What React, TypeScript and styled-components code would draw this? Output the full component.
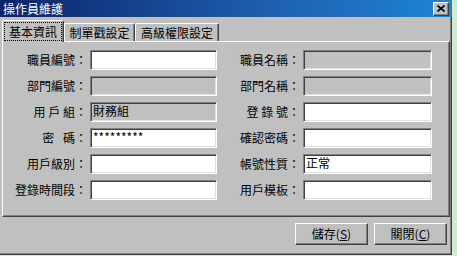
import React from "react";
import styled, { createGlobalStyle } from "styled-components";

const Global = createGlobalStyle`
  html, body { margin: 0; padding: 0; background: #cdeccd; }
  body {
    font-family: "Noto Sans CJK TC", "Liberation Sans", sans-serif;
    font-size: 12px;
    color: #000;
  }
`;

const Window = styled.div`
  width: 452px;
  height: 255px;
  display: flex;
  flex-direction: column;
  background: #c0c0c0;
`;

const TitleBar = styled.div`
  height: 17px;
  flex: 0 0 17px;
  display: flex;
  align-items: center;
  justify-content: space-between;
  padding: 0 3px 0 3px;
  background: linear-gradient(to right, #0a246a 0%, #1f5fb0 60%, #1c84d4 100%);
  color: #fff;
  font-size: 12px;
  line-height: 17px;
`;

const CloseBtn = styled.div`
  width: 16px;
  height: 14px;
  box-sizing: border-box;
  background: #c0c0c0;
  border-top: 1px solid #fff;
  border-left: 1px solid #fff;
  border-right: 1px solid #404040;
  border-bottom: 1px solid #404040;
  box-shadow: inset -1px -1px 0 #808080;
  display: flex;
  align-items: center;
  justify-content: center;
`;

const Body = styled.div`
  flex: 1;
  display: flex;
  flex-direction: column;
  padding: 3px 0 0 2px;
  border-right: 1px solid #404040;
  border-bottom: 1px solid #404040;
  box-shadow: inset -1px -1px 0 #808080;
`;

const TabRow = styled.div`
  display: flex;
  align-items: flex-end;
  height: 21px;
  position: relative;
  z-index: 2;
`;

const Tab = styled.div<{ $active?: boolean; $w: number }>`
  width: ${(p) => p.$w}px;
  height: ${(p) => (p.$active ? 22 : 18)}px;
  margin-bottom: ${(p) => (p.$active ? -1 : 0)}px;
  box-sizing: border-box;
  background: #c0c0c0;
  border-top: 1px solid #fff;
  border-left: 1px solid #fff;
  border-right: 1px solid #404040;
  border-radius: 2px 2px 0 0;
  box-shadow: inset -1px 0 0 #808080;
  display: flex;
  align-items: ${(p) => (p.$active ? "flex-start" : "center")};
  justify-content: center;
  padding-top: ${(p) => (p.$active ? 2 : 0)}px;
  line-height: 16px;
  white-space: nowrap;
`;

const Focus = styled.span`
  outline: 1px dotted #000;
  outline-offset: 0;
  padding: 0 4px;
  line-height: 17px;
`;

const Panel = styled.div`
  height: 176px;
  flex: 0 0 176px;
  box-sizing: border-box;
  width: 448px;
  border-top: 1px solid #fff;
  border-left: 1px solid #fff;
  border-right: 1px solid #404040;
  border-bottom: 1px solid #404040;
  box-shadow: inset -1px -1px 0 #808080;
  padding: 8px 0 0 0;
  display: grid;
  grid-template-columns: 84px 127px 80px 129px;
  grid-auto-rows: 20px;
  column-gap: 3px;
  row-gap: 6px;
  align-content: start;
`;

const Label = styled.div`
  text-align: right;
  line-height: 20px;
  white-space: pre;
`;

const Field = styled.div<{ $disabled?: boolean }>`
  box-sizing: border-box;
  height: 20px;
  background: ${(p) => (p.$disabled ? "#c0c0c0" : "#fff")};
  border-top: 1px solid #808080;
  border-left: 1px solid #808080;
  border-right: 1px solid #fff;
  border-bottom: 1px solid #fff;
  box-shadow: inset 1px 1px 0 #404040, inset -1px -1px 0 #dfdfdf;
  padding: 0 2px;
  line-height: 16px;
  white-space: nowrap;
  overflow: hidden;
`;

const Footer = styled.div`
  display: flex;
  justify-content: flex-end;
  gap: 6px;
  padding: 6px 4px 0 0;
`;

const Button = styled.div`
  width: 73px;
  height: 22px;
  box-sizing: border-box;
  background: #c0c0c0;
  border-top: 1px solid #fff;
  border-left: 1px solid #fff;
  border-right: 1px solid #404040;
  border-bottom: 1px solid #404040;
  box-shadow: inset -1px -1px 0 #808080;
  display: flex;
  align-items: center;
  justify-content: center;
  line-height: 18px;
`;

const rows: [string, string, boolean, string, string, boolean][] = [
  ["職員編號：", "", false, "職員名稱：", "", true],
  ["部門編號：", "", true, "部門名稱：", "", true],
  ["用 戶 組：", "財務組", true, "登 錄 號：", "", false],
  ["密\u2002 碼：", "*********", false, "確認密碼：", "", false],
  ["用戶級別：", "", false, "帳號性質：", "正常", false],
  ["登錄時間段：", "", false, "用戶模板：", "", false],
];

export default function App() {
  return (
    <>
      <Global />
      <Window>
        <TitleBar>
          <span>操作員維護</span>
          <CloseBtn>
            <svg width="8" height="7" viewBox="0 0 8 7">
              <path d="M0.5 0.5 L7.5 6.5 M7.5 0.5 L0.5 6.5" stroke="#000" strokeWidth="1.6" />
            </svg>
          </CloseBtn>
        </TitleBar>
        <Body>
          <TabRow>
            <Tab $active $w={62}>
              <Focus>基本資訊</Focus>
            </Tab>
            <Tab $w={71}>制單戳設定</Tab>
            <Tab $w={84}>高級權限設定</Tab>
          </TabRow>
          <Panel>
            {rows.map((r, i) => (
              <React.Fragment key={i}>
                <Label>{r[0]}</Label>
                <Field $disabled={r[2]}>{r[1]}</Field>
                <Label>{r[3]}</Label>
                <Field $disabled={r[5]}>{r[4]}</Field>
              </React.Fragment>
            ))}
          </Panel>
          <Footer>
            <Button>
              儲存(<u>S</u>)
            </Button>
            <Button>
              關閉(<u>C</u>)
            </Button>
          </Footer>
        </Body>
      </Window>
    </>
  );
}
